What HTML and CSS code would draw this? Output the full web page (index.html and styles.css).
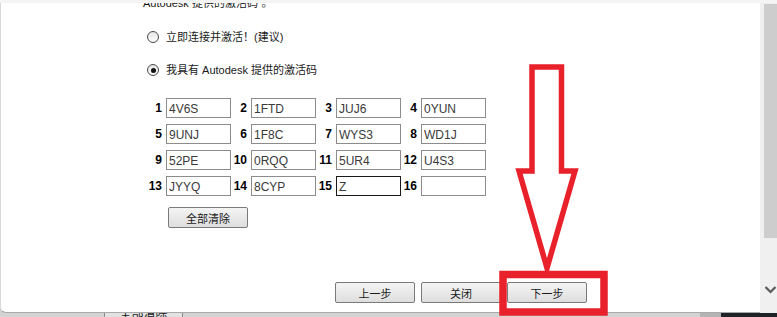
FILE: index.html
```html
<!DOCTYPE html>
<html lang="zh-CN">

<head>
    <meta charset="UTF-8">
    <title>Autodesk 产品激活</title>
    <link rel="stylesheet" href="styles.css">
</head>

<body>
    <div class="screen">
        <div class="top-strip"></div>

        <div class="window">
            <!-- 激活对话框 -->
            <div class="dialog">
                <p class="intro">Autodesk 提供的激活码”。</p>

                <label class="option">
                    <span class="radio"></span> 立即连接并激活！(建议)
                </label>
                <label class="option option-second">
                    <span class="radio checked"></span> 我具有 Autodesk 提供的激活码
                </label>

                <div class="code-grid">
                    <div class="cell"><span class="num">1</span><input class="code" value="4V6S"></div>
                    <div class="cell"><span class="num">2</span><input class="code" value="1FTD"></div>
                    <div class="cell"><span class="num">3</span><input class="code" value="JUJ6"></div>
                    <div class="cell"><span class="num">4</span><input class="code" value="0YUN"></div>
                    <div class="cell"><span class="num">5</span><input class="code" value="9UNJ"></div>
                    <div class="cell"><span class="num">6</span><input class="code" value="1F8C"></div>
                    <div class="cell"><span class="num">7</span><input class="code" value="WYS3"></div>
                    <div class="cell"><span class="num">8</span><input class="code" value="WD1J"></div>
                    <div class="cell"><span class="num">9</span><input class="code" value="52PE"></div>
                    <div class="cell"><span class="num">10</span><input class="code" value="0RQQ"></div>
                    <div class="cell"><span class="num">11</span><input class="code" value="5UR4"></div>
                    <div class="cell"><span class="num">12</span><input class="code" value="U4S3"></div>
                    <div class="cell"><span class="num">13</span><input class="code" value="JYYQ"></div>
                    <div class="cell"><span class="num">14</span><input class="code" value="8CYP"></div>
                    <div class="cell"><span class="num">15</span><input class="code active" value="Z"></div>
                    <div class="cell"><span class="num">16</span><input class="code" value=""></div>
                </div>

                <button class="btn btn-clear">全部清除</button>

                <div class="footer">
                    <button class="btn">上一步</button>
                    <button class="btn">关闭</button>
                    <button class="btn">下一步</button>
                </div>
            </div>

            <!-- 滚动条 -->
            <div class="scrollbar">
                <div class="thumb"></div>
                <svg class="chevron" width="13" height="9" viewBox="0 0 13 9">
                    <path d="M1.5 2 L6.5 7 L11.5 2" fill="none" stroke="#5a5a5a" stroke-width="2.2" />
                </svg>
            </div>
        </div>

        <!-- 后面窗口露出的部分 -->
        <div class="behind">
            <span class="behind-btn">全部清除</span>
            <span class="behind-fill"></span>
            <span class="behind-scroll"></span>
            <span class="behind-dark"></span>
        </div>

        <!-- 红色标注 -->
        <svg class="annotation" width="777" height="317" viewBox="0 0 777 317">
            <polygon points="532,67 561.5,67 561.5,171 575,171 547,268 519,171 532,171"
                fill="none" stroke="#e8212b" stroke-width="5.5" stroke-linejoin="miter" />
            <rect x="503" y="274.5" width="101" height="37.5" fill="none" stroke="#e8212b" stroke-width="7.5" />
        </svg>
    </div>
</body>

</html>
```

FILE: styles.css
```css
body {
    margin: 0;
    overflow: hidden;
    background-color: #cfcfcf;
    font-family: "Liberation Sans", "Noto Sans CJK SC", sans-serif;
    font-size: 11px;
    color: #1a1a1a;
}

.screen {
    position: relative;
    width: 777px;
    height: 317px;
    display: flex;
    flex-direction: column;
}

.top-strip {
    height: 3px;
    background-color: #f4f4f4;
}

.window {
    display: flex;
    height: 310px;
}

/* 对话框主体 */

.dialog {
    flex: 1;
    display: flex;
    flex-direction: column;
    align-items: flex-start;
    background-color: #fff;
    border-left: 1px solid #d8d8d8;
    border-bottom: 1px solid #a9a9a9;
    border-bottom-left-radius: 6px;
    padding-left: 142px;
    overflow: hidden;
}

.intro {
    margin: -8px 0 0 0;
    line-height: 16px;
}

.option {
    display: flex;
    align-items: center;
    gap: 7px;
    line-height: 16px;
    margin-top: 18px;
    margin-left: 4px;
}

.option-second {
    margin-top: 17px;
}

.radio {
    width: 10px;
    height: 10px;
    border: 1px solid #4a4a4a;
    border-radius: 50%;
    background: linear-gradient(#e6e6e6, #fdfdfd);
    display: flex;
    align-items: center;
    justify-content: center;
}

.radio.checked::after {
    content: "";
    width: 5px;
    height: 5px;
    border-radius: 50%;
    background-color: #111;
}

/* 激活码输入 */

.code-grid {
    display: grid;
    grid-template-columns: repeat(4, 85px);
    row-gap: 6px;
    margin-top: 20px;
    margin-left: 3px;
}

.cell {
    display: flex;
    align-items: center;
}

.num {
    width: 16px;
    margin-right: 4px;
    text-align: right;
    font-size: 12px;
    font-weight: bold;
    color: #000;
}

.code {
    width: 65px;
    height: 20px;
    box-sizing: border-box;
    border: 1px solid #8c8c8c;
    padding: 1px 2px 0;
    margin: 0;
    font-family: "Liberation Sans", sans-serif;
    font-size: 12px;
    color: #3a3a3a;
    outline: none;
}

.code.active {
    border-color: #1a1a1a;
}

/* 按钮 */

.btn {
    width: 80px;
    height: 21px;
    padding: 0;
    border: 1px solid #7a7a7a;
    border-radius: 2px;
    background: linear-gradient(#f4f4f4, #dedede);
    font-family: "Liberation Sans", "Noto Sans CJK SC", sans-serif;
    font-size: 11px;
    color: #1a1a1a;
}

.btn-clear {
    margin-top: 11px;
    margin-left: 25px;
}

.footer {
    margin-top: auto;
    margin-bottom: 9px;
    margin-left: 192px;
    display: flex;
    gap: 6px;
}

/* 滚动条 */

.scrollbar {
    width: 17px;
    position: relative;
    background-color: #f0f0f0;
}

.thumb {
    margin: 1px 0 0 4px;
    height: 234px;
    background-color: #cdcdcd;
}

.chevron {
    position: absolute;
    left: 4px;
    top: 282px;
}

/* 底部后面窗口 */

.behind {
    flex: 1;
    display: flex;
    overflow: hidden;
    background-color: #d3d3d3;
}

.behind-btn {
    margin-left: 104px;
    width: 77px;
    height: 12px;
    margin-top: -6px;
    border: 1px solid #8a8a8a;
    background-color: #e2e2e2;
    text-align: center;
    line-height: 12px;
    font-size: 12px;
}

.behind-fill {
    flex: 1;
}

.behind-scroll {
    width: 21px;
    background-color: #b4b4b4;
}

.behind-dark {
    width: 56px;
    background-color: #1f2327;
}

/* 红色标注层 */

.annotation {
    position: absolute;
    left: 0;
    top: 0;
    pointer-events: none;
}
```
